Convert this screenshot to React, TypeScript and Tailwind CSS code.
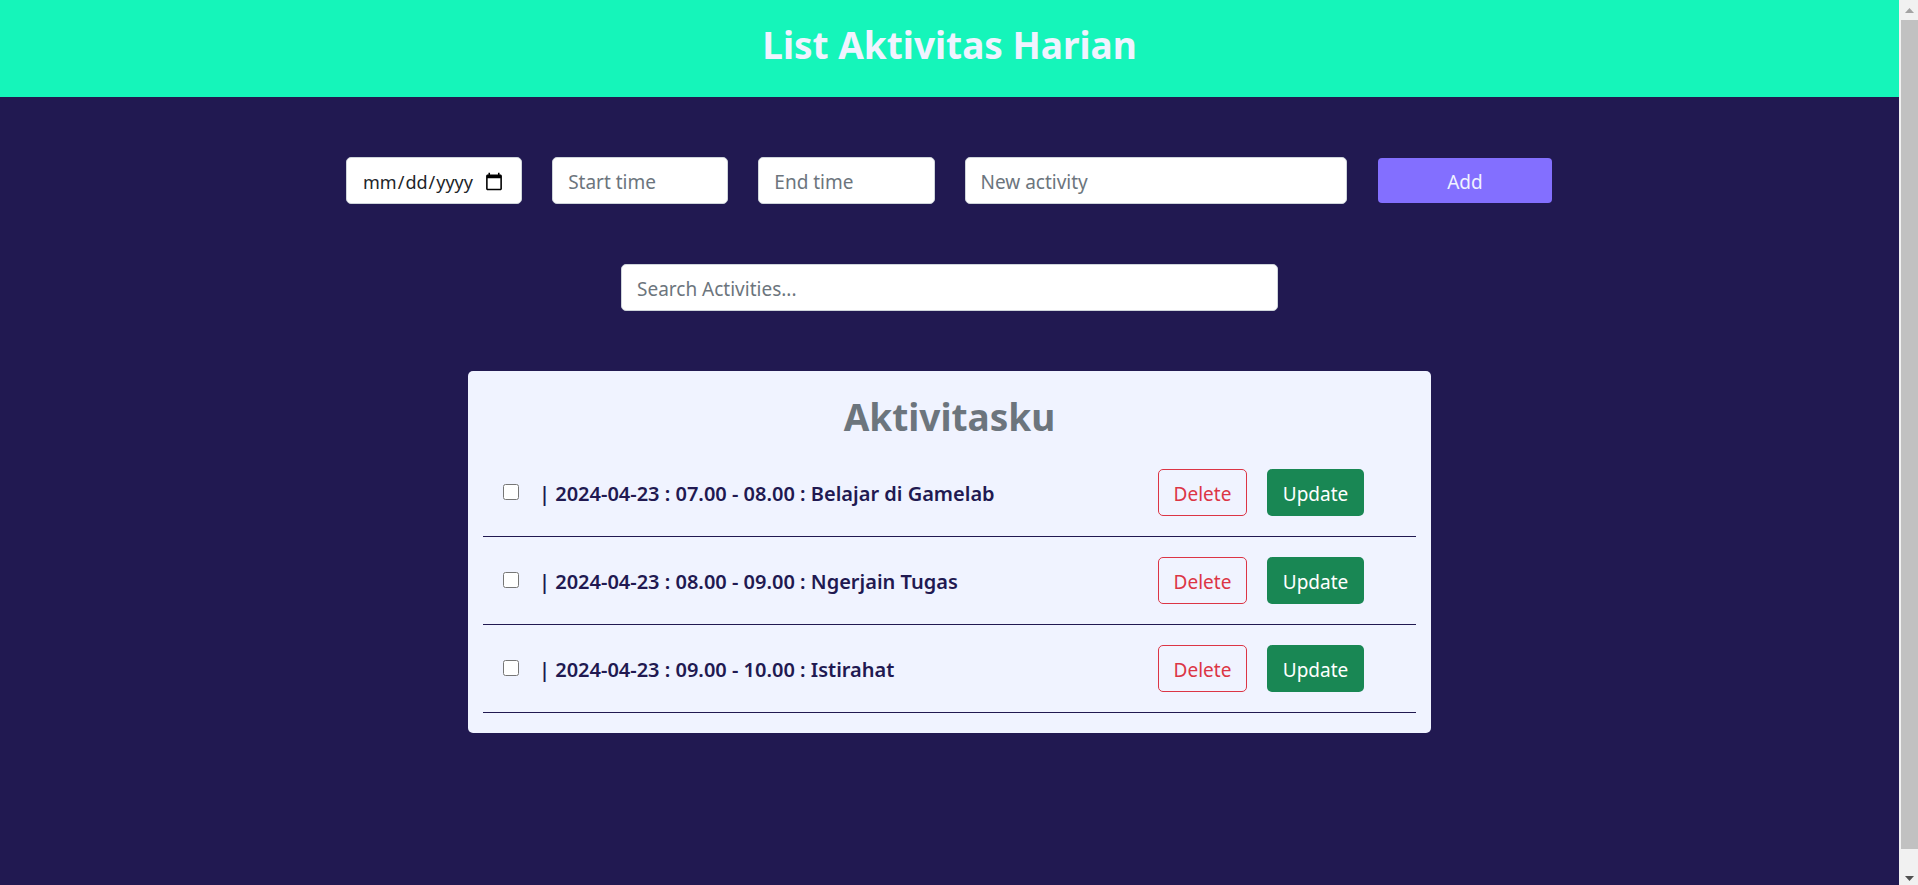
import { useState } from "react";

type Activity = {
  id: number;
  date: string;
  start: string;
  end: string;
  name: string;
};

const initialActivities: Activity[] = [
  { id: 1, date: "2024-04-23", start: "07.00", end: "08.00", name: "Belajar di Gamelab" },
  { id: 2, date: "2024-04-23", start: "08.00", end: "09.00", name: "Ngerjain Tugas" },
  { id: 3, date: "2024-04-23", start: "09.00", end: "10.00", name: "Istirahat" },
];

const fieldClass =
  "h-[47px] w-full rounded-[5px] border border-[#ced4da] bg-white px-[15px] pt-[3px] text-[#212529] placeholder:text-[#6c757d] placeholder:opacity-100";

function ActivityForm() {
  return (
    <form
      className="grid w-full max-w-[1207px] grid-cols-6 items-center gap-[30px]"
      onSubmit={(event) => event.preventDefault()}
    >
      <input
        type="date"
        aria-label="Date"
        className={`${fieldClass} text-[18px] [&::-webkit-calendar-picker-indicator]:size-5`}
      />
      <input type="text" aria-label="Start time" placeholder="Start time" className={`${fieldClass} text-[19px]`} />
      <input type="text" aria-label="End time" placeholder="End time" className={`${fieldClass} text-[19px]`} />
      <div className="col-span-2">
        <input
          type="text"
          aria-label="New activity"
          placeholder="New activity"
          className={`${fieldClass} text-[19px]`}
        />
      </div>
      <button type="submit" className="mx-px h-[45px] rounded bg-[#836fff] pt-[3px] text-[19px] text-[#f0f3ff]">
        Add
      </button>
    </form>
  );
}

function ActivityRow({ activity }: { activity: Activity }) {
  const [done, setDone] = useState(false);
  const id = `activity-${activity.id}`;
  return (
    <li className="flex items-center border-b border-[#211951] py-5 pr-[52px] pl-5">
      <input
        id={id}
        type="checkbox"
        checked={done}
        onChange={() => setDone(!done)}
        className="mb-[2px] size-4 shrink-0"
      />
      <label htmlFor={id} className="ml-5 flex-1 pt-[3px] text-[20px] font-semibold text-[#211951]">
        | {activity.date} : {activity.start} - {activity.end} : {activity.name}
      </label>
      <div className="flex gap-5">
        <button
          type="button"
          className="h-[47px] w-[89px] rounded-[5px] border border-[#dc3545] pt-[3px] text-[19px] text-[#dc3545]"
        >
          Delete
        </button>
        <button
          type="button"
          className="h-[47px] w-[97px] rounded-[5px] bg-[#198754] pt-[3px] text-[19px] text-white"
        >
          Update
        </button>
      </div>
    </li>
  );
}

function ScrollRail() {
  return (
    <div aria-hidden="true" className="flex w-[19px] shrink-0 flex-col items-center bg-[#f1f1f1] pl-[2px]">
      <svg width="17" height="20" viewBox="0 0 17 20" fill="#a3a3a3">
        <path d="M4 13 8.5 8 13 13Z" />
      </svg>
      <div className="w-full flex-1 bg-[#c1c1c1]" />
      <svg width="17" height="36" viewBox="0 0 17 36" fill="#505050">
        <path d="M4 27 8.5 32 13 27Z" />
      </svg>
    </div>
  );
}

export default function App() {
  return (
    <div className="flex min-h-screen bg-[#211951] font-['Noto_Sans','Open_Sans',sans-serif]">
      <div className="flex flex-1 flex-col">
        <header className="h-[97px] bg-[#15f5ba] pt-[21px] text-center">
          <h1 className="text-[37px] leading-[48px] font-bold text-[#f0f3ff]">List Aktivitas Harian</h1>
        </header>
        <main className="flex flex-col items-center gap-[60px] px-4 py-[60px]">
          <ActivityForm />
          <input
            type="search"
            aria-label="Search Activities"
            placeholder="Search Activities..."
            className={`${fieldClass} max-w-[657px] text-[19px]`}
          />
          <section className="w-full max-w-[963px] rounded-[5px] bg-[#f0f3ff] px-[15px] pb-5">
            <h2 className="pt-[22px] pb-2 text-center text-[37px] leading-[48px] font-bold text-[#6c757d]">
              Aktivitasku
            </h2>
            <ul>
              {initialActivities.map((activity) => (
                <ActivityRow key={activity.id} activity={activity} />
              ))}
            </ul>
          </section>
        </main>
      </div>
      <ScrollRail />
    </div>
  );
}
